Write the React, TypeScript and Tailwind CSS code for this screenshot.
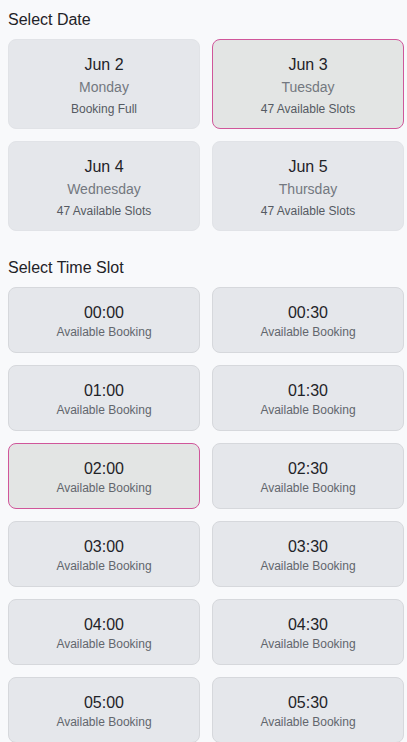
import React from "react";

const dates = [
  { d: "Jun 2", w: "Monday", s: "Booking Full", sel: false },
  { d: "Jun 3", w: "Tuesday", s: "47 Available Slots", sel: true },
  { d: "Jun 4", w: "Wednesday", s: "47 Available Slots", sel: false },
  { d: "Jun 5", w: "Thursday", s: "47 Available Slots", sel: false },
];

const times = [
  "00:00", "00:30", "01:00", "01:30", "02:00", "02:30",
  "03:00", "03:30", "04:00", "04:30", "05:00", "05:30",
];

export default function App() {
  return (
    <div
      className="min-h-screen bg-[#f8f9fb] pl-2 pr-[3px] pt-2 pb-4"
      style={{ fontFamily: '"Liberation Sans", Arial, sans-serif' }}
    >
      <div className="text-base leading-6 text-[#1f2328] mb-[7px]">Select Date</div>
      <div className="grid grid-cols-2 gap-3">
        {dates.map((x) => (
          <div
            key={x.d}
            className={
              x.sel
                ? "h-[90px] pt-[2px] rounded-lg border border-[#d0569a] bg-[#e3e5e4] flex flex-col items-center justify-center"
                : "h-[90px] pt-[2px] rounded-lg border border-[#e1e3e7] bg-[#e5e7eb] flex flex-col items-center justify-center"
            }
          >
            <div className="text-base leading-6 text-[#1f2328]">{x.d}</div>
            <div className="text-sm leading-5 text-[#737880]">{x.w}</div>
            <div className="mt-1 text-xs leading-4 text-[#555a62]">{x.s}</div>
          </div>
        ))}
      </div>
      <div className="mt-[25px] text-base leading-6 text-[#1f2328] mb-[7px]">Select Time Slot</div>
      <div className="grid grid-cols-2 gap-3">
        {times.map((t) => {
          const sel = t === "02:00";
          return (
            <div
              key={t}
              className={
                sel
                  ? "h-[66px] pt-[2px] rounded-lg border border-[#d0569a] bg-[#e3e5e4] flex flex-col items-center justify-center"
                  : "h-[66px] pt-[2px] rounded-lg border border-[#d6d8dc] bg-[#e5e7eb] flex flex-col items-center justify-center"
              }
            >
              <div className="text-base leading-5 text-[#1f2328]">{t}</div>
              <div className="mt-px text-xs leading-4 text-[#62666d]">Available Booking</div>
            </div>
          );
        })}
      </div>
    </div>
  );
}
